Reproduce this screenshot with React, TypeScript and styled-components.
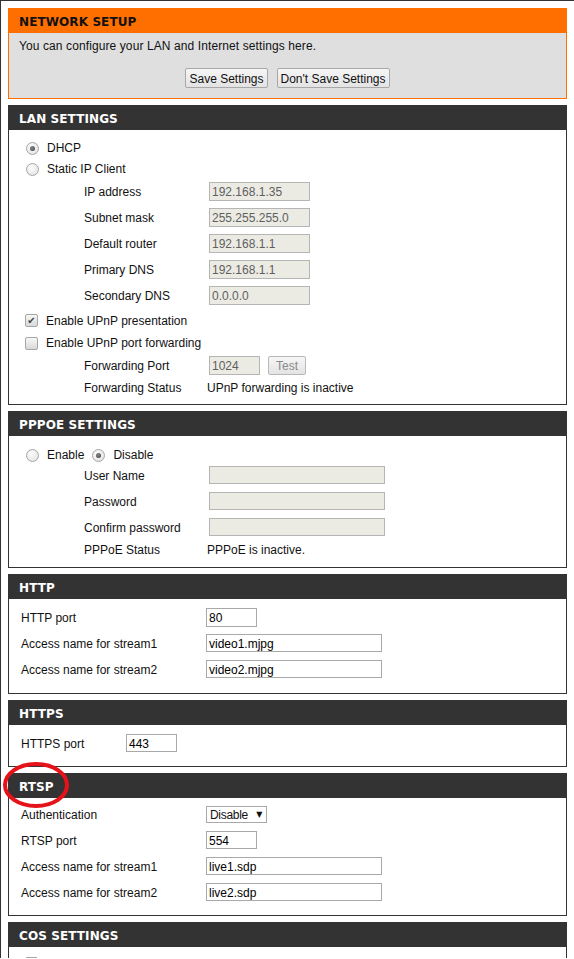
import React from "react";
import styled, { createGlobalStyle } from "styled-components";

const GlobalStyle = createGlobalStyle`
  html, body {
    margin: 0;
    padding: 0;
    background: #ffffff;
  }
  body {
    font-family: "Liberation Sans", Arial, sans-serif;
    font-size: 12px;
    color: #111;
  }
`;

const Page = styled.div`
  position: relative;
  border-top: 1px solid #333;
  border-left: 1px solid #333;
  padding: 7px 7px 0 7px;
  height: 958px;
  box-sizing: border-box;
  overflow: hidden;
  display: flex;
  flex-direction: column;
  gap: 6px;
`;

const Panel = styled.section<{ $accent?: string }>`
  border: 1px solid ${(p) => p.$accent || "#333"};
  background: #fff;
  flex-shrink: 0;
`;

const PanelTitle = styled.div<{ $bg?: string; $fg?: string }>`
  height: 24px;
  box-sizing: border-box;
  display: flex;
  align-items: center;
  padding: 2px 0 0 10px;
  background: ${(p) => p.$bg || "#333"};
  color: ${(p) => p.$fg || "#fff"};
  font-family: "DejaVu Sans", Verdana, sans-serif;
  font-weight: bold;
  font-size: 12px;
  letter-spacing: 0.1px;
`;

const IntroBody = styled.div`
  background: #dfdfdf;
  padding: 6px 10px 10px 10px;
  height: 65px;
  box-sizing: border-box;
`;

const IntroText = styled.div`
  line-height: 15px;
  margin-bottom: 14px;
  letter-spacing: 0.1px;
`;

const ButtonBar = styled.div`
  display: flex;
  justify-content: center;
  gap: 9px;
`;

const Button = styled.button<{ $disabled?: boolean; $px?: number }>`
  height: ${(p) => (p.$disabled ? 19 : 20)}px;
  padding: 1px ${(p) => p.$px ?? 3}px 0 ${(p) => p.$px ?? 3}px;
  font-family: "Liberation Sans", Arial, sans-serif;
  font-size: 12px;
  color: ${(p) => (p.$disabled ? "#8a8a8a" : "#111")};
  background: linear-gradient(#f6f6f6, #e3e3e3);
  border: 1px solid ${(p) => (p.$disabled ? "#b8b8b8" : "#a8a8a8")};
  border-radius: 2px;
  cursor: default;
`;

const Body = styled.div<{ $pt: number; $pb: number; $pl?: number }>`
  padding: ${(p) => p.$pt}px 0 ${(p) => p.$pb}px ${(p) => p.$pl ?? 12}px;
`;

const Row = styled.div<{ $h: number; $indent?: number }>`
  height: ${(p) => p.$h}px;
  display: flex;
  align-items: center;
  padding-left: ${(p) => p.$indent || 0}px;
`;

const Label = styled.div<{ $w: number }>`
  width: ${(p) => p.$w}px;
  padding-top: 2px;
  flex-shrink: 0;
  white-space: nowrap;
`;

const Option = styled.label<{ $gap?: number }>`
  display: inline-flex;
  align-items: center;
  gap: ${(p) => p.$gap ?? 8}px;
  margin-right: 8px;
  padding-top: 2px;
  white-space: nowrap;
`;

const Radio = styled.span<{ $on?: boolean }>`
  position: relative;
  width: 11px;
  height: 11px;
  border-radius: 50%;
  border: 1px solid #a6a6a6;
  background: radial-gradient(circle at 40% 35%, #fdfdfd, #dedede);
  box-sizing: content-box;
  flex-shrink: 0;

  &::after {
    content: "";
    display: ${(p) => (p.$on ? "block" : "none")};
    position: absolute;
    left: 3px;
    top: 3px;
    width: 5px;
    height: 5px;
    border-radius: 50%;
    background: radial-gradient(circle at 40% 35%, #8a8a8a, #3c3c3c);
  }
`;

const Checkbox = styled.span<{ $on?: boolean }>`
  width: 11px;
  height: 11px;
  border: 1px solid #a6a6a6;
  border-radius: 2px;
  background: linear-gradient(#f7f7f7, #d9d9d9);
  display: inline-flex;
  align-items: center;
  justify-content: center;
  flex-shrink: 0;
  font-size: 10px;
  line-height: 1;
  color: #444;
  font-family: "DejaVu Sans", sans-serif;
`;

const TextBox = styled.div<{ $w: number; $h?: number; $disabled?: boolean }>`
  width: ${(p) => p.$w}px;
  height: ${(p) => p.$h ?? 18}px;
  box-sizing: border-box;
  border: 1px solid ${(p) => (p.$disabled ? "#b5b5b5" : "#a9a9a9")};
  background: ${(p) => (p.$disabled ? "#ebebe4" : "#fff")};
  color: ${(p) => (p.$disabled ? "#5f5f5f" : "#000")};
  padding: 1px 0 0 2px;
  display: flex;
  align-items: center;
  white-space: nowrap;
  flex-shrink: 0;
`;

const Select = styled.div`
  width: 61px;
  height: 17px;
  box-sizing: border-box;
  border: 1px solid #a9a9a9;
  background: #fff;
  padding: 1px 4px 0 3px;
  display: flex;
  align-items: center;
  justify-content: space-between;
  letter-spacing: -0.3px;
`;

const Caret = styled.span`
  font-size: 8px;
  color: #111;
  font-family: "DejaVu Sans", sans-serif;
`;

const Gap = styled.span<{ $w: number }>`
  display: inline-block;
  width: ${(p) => p.$w}px;
`;

const Value = styled.div`
  padding-top: 2px;
  white-space: nowrap;
`;

const Highlight = styled.svg`
  position: absolute;
  left: -1px;
  top: 759px;
  pointer-events: none;
`;

type Field = { label: string; value: string; w?: number; h?: number };

const lanFields: Field[] = [
  { label: "IP address", value: "192.168.1.35" },
  { label: "Subnet mask", value: "255.255.255.0" },
  { label: "Default router", value: "192.168.1.1" },
  { label: "Primary DNS", value: "192.168.1.1" },
  { label: "Secondary DNS", value: "0.0.0.0" },
];

const pppoeFields = ["User Name", "Password", "Confirm password"];

const httpFields: Field[] = [
  { label: "HTTP port", value: "80", w: 51, h: 19 },
  { label: "Access name for stream1", value: "video1.mjpg", w: 176 },
  { label: "Access name for stream2", value: "video2.mjpg", w: 176 },
];

const rtspFields: Field[] = [
  { label: "RTSP port", value: "554", w: 51 },
  { label: "Access name for stream1", value: "live1.sdp", w: 176 },
  { label: "Access name for stream2", value: "live2.sdp", w: 176 },
];

export default function App() {
  return (
    <>
      <GlobalStyle />
      <Page>
        <Panel $accent="#ff6f00">
          <PanelTitle $bg="#ff6f00" $fg="#111">
            NETWORK SETUP
          </PanelTitle>
          <IntroBody>
            <IntroText>
              You can configure your LAN and Internet settings here.
            </IntroText>
            <ButtonBar>
              <Button>Save Settings</Button>
              <Button>Don't Save Settings</Button>
            </ButtonBar>
          </IntroBody>
        </Panel>

        <Panel>
          <PanelTitle>LAN SETTINGS</PanelTitle>
          <Body $pt={6} $pb={8} $pl={0}>
            <Row $h={22} $indent={17}>
              <Option>
                <Radio $on />
                DHCP
              </Option>
            </Row>
            <Row $h={20} $indent={17}>
              <Option>
                <Radio />
                Static IP Client
              </Option>
            </Row>
            {lanFields.map((f) => (
              <Row key={f.label} $h={26} $indent={75}>
                <Label $w={125}>{f.label}</Label>
                <TextBox $w={101} $h={19} $disabled>
                  {f.value}
                </TextBox>
              </Row>
            ))}
            <Row $h={23} $indent={16}>
              <Option>
                <Checkbox $on>✔</Checkbox>
                Enable UPnP presentation
              </Option>
            </Row>
            <Row $h={22} $indent={16}>
              <Option>
                <Checkbox />
                Enable UPnP port forwarding
              </Option>
            </Row>
            <Row $h={24} $indent={75}>
              <Label $w={125}>Forwarding Port</Label>
              <TextBox $w={51} $h={19} $disabled>
                1024
              </TextBox>
              <Gap $w={8} />
              <Button $disabled $px={7}>
                Test
              </Button>
            </Row>
            <Row $h={19} $indent={75}>
              <Label $w={123}>Forwarding Status</Label>
              <Value>UPnP forwarding is inactive</Value>
            </Row>
          </Body>
        </Panel>

        <Panel>
          <PanelTitle>PPPOE SETTINGS</PanelTitle>
          <Body $pt={10} $pb={9} $pl={0}>
            <Row $h={16} $indent={17}>
              <Option>
                <Radio />
                Enable
              </Option>
              <Option>
                <Radio $on />
                Disable
              </Option>
            </Row>
            {pppoeFields.map((label) => (
              <Row key={label} $h={26} $indent={75}>
                <Label $w={125}>{label}</Label>
                <TextBox $w={176} $disabled />
              </Row>
            ))}
            <Row $h={18} $indent={75}>
              <Label $w={123}>PPPoE Status</Label>
              <Value>PPPoE is inactive.</Value>
            </Row>
          </Body>
        </Panel>

        <Panel>
          <PanelTitle>HTTP</PanelTitle>
          <Body $pt={5} $pb={11}>
            {httpFields.map((f) => (
              <Row key={f.label} $h={26}>
                <Label $w={185}>{f.label}</Label>
                <TextBox $w={f.w ?? 176} $h={f.h}>
                  {f.value}
                </TextBox>
              </Row>
            ))}
          </Body>
        </Panel>

        <Panel>
          <PanelTitle>HTTPS</PanelTitle>
          <Body $pt={5} $pb={10}>
            <Row $h={26}>
              <Label $w={105}>HTTPS port</Label>
              <TextBox $w={51}>443</TextBox>
            </Row>
          </Body>
        </Panel>

        <Panel>
          <PanelTitle>RTSP</PanelTitle>
          <Body $pt={3} $pb={10}>
            <Row $h={26}>
              <Label $w={185}>Authentication</Label>
              <Select>
                <span>Disable</span>
                <Caret>▼</Caret>
              </Select>
            </Row>
            {rtspFields.map((f) => (
              <Row key={f.label} $h={26}>
                <Label $w={185}>{f.label}</Label>
                <TextBox $w={f.w ?? 176}>{f.value}</TextBox>
              </Row>
            ))}
          </Body>
        </Panel>

        <Panel>
          <PanelTitle>COS SETTINGS</PanelTitle>
          <Body $pt={9} $pb={10} $pl={0}>
            <Row $h={14} $indent={16}>
              <Checkbox />
            </Row>
          </Body>
        </Panel>

        <Highlight width="72" height="50" viewBox="0 0 72 50">
          <ellipse
            cx="36"
            cy="25"
            rx="31"
            ry="21"
            fill="none"
            stroke="#e5121a"
            strokeWidth="4"
          />
        </Highlight>
      </Page>
    </>
  );
}
